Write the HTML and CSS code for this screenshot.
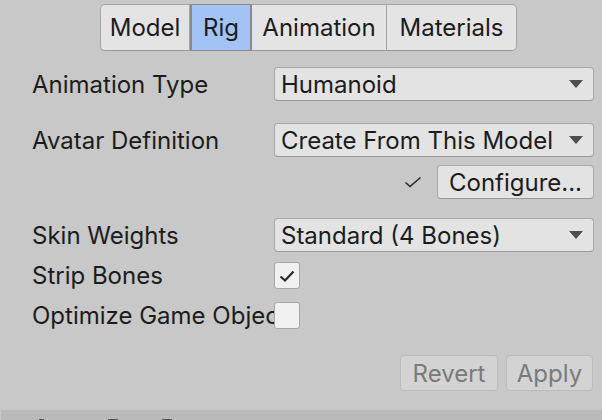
FILE: index.html
```html
<!DOCTYPE html>
<html>
<head>
<meta charset="utf-8">
<link rel="stylesheet" href="styles.css">
</head>
<body>
<div class="panel">
  <div class="tabs">
    <div class="tab t-model">Model</div>
    <div class="tab t-rig active">Rig</div>
    <div class="tab t-anim">Animation</div>
    <div class="tab t-mat">Materials</div>
  </div>

  <div class="row r1">
    <div class="label">Animation Type</div>
    <div class="dropdown"><span>Humanoid</span><i class="arrow"></i></div>
  </div>
  <div class="row r2">
    <div class="label">Avatar Definition</div>
    <div class="dropdown"><span>Create From This Model</span><i class="arrow"></i></div>
  </div>
  <div class="row r3">
    <svg class="okcheck" width="18" height="12" viewBox="0 0 18 12"><path d="M1.5 6.5 L6 10.5 L16.5 1.5" fill="none" stroke="#2a2a2a" stroke-width="1.6"/></svg>
    <div class="btn configure">Configure...</div>
  </div>
  <div class="row r4">
    <div class="label">Skin Weights</div>
    <div class="dropdown"><span>Standard (4 Bones)</span><i class="arrow"></i></div>
  </div>
  <div class="row r5">
    <div class="label">Strip Bones</div>
    <div class="checkbox"><svg width="18" height="14" viewBox="0 0 18 14"><path d="M2.5 7.5 L7 11.5 L15.5 2.5" fill="none" stroke="#2a2a2a" stroke-width="2.2"/></svg></div>
  </div>
  <div class="row r6">
    <div class="label">Optimize Game Objects</div>
    <div class="checkbox"></div>
  </div>
  <div class="actions">
    <div class="btn disabled revert">Revert</div>
    <div class="btn disabled apply">Apply</div>
  </div>
  <div class="bottombar">
    <span class="g g1"></span><span class="g g2"></span><span class="g g3"></span>
  </div>
</div>
</body>
</html>
```
FILE: styles.css
```css
html, body {
  margin: 0;
  padding: 0;
  background: #c8c8c8;
  width: 602px;
  height: 420px;
  overflow: hidden;
}
.panel {
  font-family: Inter, "Noto Sans", sans-serif;
  font-size: 24px;
  color: #1c1c1c;
  display: flex;
  flex-direction: column;
}
.tabs {
  display: flex;
  margin: 4px 0 0 100px;
  height: 47px;
}
.tab {
  box-sizing: border-box;
  height: 47px;
  display: flex;
  align-items: center;
  justify-content: center;
  background: #e4e4e4;
  border: 1px solid #a4a4a4;
  border-bottom-color: #979797;
  border-left: none;
}
.t-model { width: 90px; border-left: 1px solid #a4a4a4; border-radius: 5px 0 0 5px; }
.t-rig { width: 62px; }
.t-anim { width: 135px; }
.t-mat { width: 130px; border-radius: 0 5px 5px 0; }
.tab.active {
  background: #a3c3f5;
  border-color: #8a8a8a;
  border-left: 2px solid #8a8a8a;
  border-right: 2px solid #8a8a8a;
}
.row {
  display: flex;
  align-items: center;
  padding-left: 32px;
  padding-right: 8px;
}
.label {
  width: 242px;
  flex: none;
  white-space: nowrap;
  overflow: hidden;
}
.r1 { margin-top: 16px; height: 34px; }
.r2 { margin-top: 22px; height: 34px; }
.r3 { margin-top: 8px; height: 34px; justify-content: flex-end; }
.r4 { margin-top: 19px; height: 34px; }
.r5 { margin-top: 10px; height: 27px; }
.r6 { margin-top: 13px; height: 27px; }
.dropdown {
  box-sizing: border-box;
  width: 320px;
  height: 34px;
  background: #e3e3e3;
  border: 1px solid #a9a9a9;
  border-bottom-color: #999;
  border-radius: 4px;
  display: flex;
  align-items: center;
  justify-content: space-between;
  padding: 0 10px 0 6px;
  white-space: nowrap;
}
.arrow {
  width: 0;
  height: 0;
  border-left: 7px solid transparent;
  border-right: 7px solid transparent;
  border-top: 8px solid #4e4e4e;
}
.okcheck { margin-right: 15px; }
.btn {
  box-sizing: border-box;
  height: 34px;
  display: flex;
  align-items: center;
  justify-content: center;
  background: #e3e3e3;
  border: 1px solid #a9a9a9;
  border-bottom-color: #999;
  border-radius: 4px;
}
.configure { width: 157px; }
.checkbox {
  box-sizing: border-box;
  width: 26px;
  height: 27px;
  background: #f0f0f0;
  border: 1px solid #a6a6a6;
  border-radius: 3px;
  display: flex;
  align-items: center;
  justify-content: center;
}
.actions {
  display: flex;
  justify-content: flex-end;
  gap: 8px;
  margin-top: 26px;
  padding-right: 9px;
}
.btn.disabled {
  height: 36px;
  background: #d3d3d3;
  border-color: #bcbcbc;
  color: #7a7a7a;
}
.revert { width: 98px; }
.apply { width: 87px; }
.bottombar {
  margin-top: 19px;
  margin-left: 1px;
  height: 10px;
  background: #bababa;
  display: flex;
  align-items: flex-end;
}
.g { height: 1px; background: #555; display: block; flex: none; }
.g1 { width: 5px; margin-left: 38px; }
.g2 { width: 10px; margin-left: 64px; }
.g3 { width: 10px; margin-left: 44px; }
```
